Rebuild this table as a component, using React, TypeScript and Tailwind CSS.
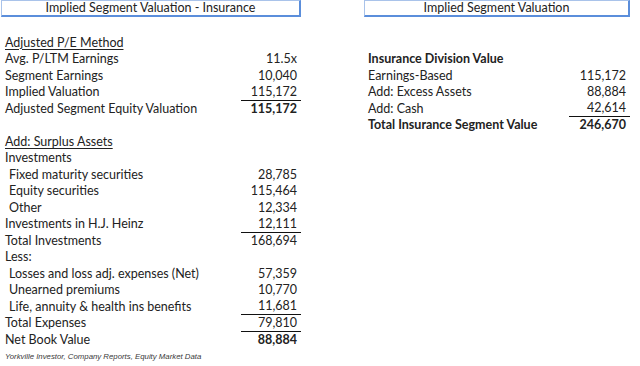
import React from "react";

type Row = {
  label?: string;
  value?: string;
  indent?: boolean;
  bold?: boolean;
  boldValue?: boolean;
  heading?: boolean;
  line?: boolean;
};

const leftRows: Row[] = [
  { label: "Adjusted P/E Method", heading: true },
  { label: "Avg. P/LTM Earnings", value: "11.5x" },
  { label: "Segment Earnings", value: "10,040" },
  { label: "Implied Valuation", value: "115,172", line: true },
  { label: "Adjusted Segment Equity Valuation", value: "115,172", boldValue: true },
  {},
  { label: "Add: Surplus Assets", heading: true },
  { label: "Investments" },
  { label: "Fixed maturity securities", value: "28,785", indent: true },
  { label: "Equity securities", value: "115,464", indent: true },
  { label: "Other", value: "12,334", indent: true },
  { label: "Investments in H.J. Heinz", value: "12,111", line: true },
  { label: "Total Investments", value: "168,694" },
  { label: "Less:" },
  { label: "Losses and loss adj. expenses (Net)", value: "57,359", indent: true },
  { label: "Unearned premiums", value: "10,770", indent: true },
  { label: "Life, annuity & health ins benefits", value: "11,681", indent: true, line: true },
  { label: "Total Expenses", value: "79,810", line: true },
  { label: "Net Book Value", value: "88,884", boldValue: true },
];

const rightRows: Row[] = [
  {},
  { label: "Insurance Division Value", bold: true },
  { label: "Earnings-Based", value: "115,172" },
  { label: "Add: Excess Assets", value: "88,884" },
  { label: "Add: Cash", value: "42,614", line: true },
  { label: "Total Insurance Segment Value", value: "246,670", bold: true, boldValue: true },
];

const TitleBox = ({ text }: { text: string }) => (
  <div className="h-[17px] flex items-center justify-center border-t border-l border-t-[#a9c3ea] border-l-[#a9c3ea] border-r-2 border-b-2 border-r-[#5b8edb] border-b-[#5b8edb] text-[12.5px] leading-none">
    {text}
  </div>
);

const SheetRow = ({ row, numWidth }: { row: Row; numWidth: string }) => (
  <div className="h-[16.5px] flex items-center">
    <div className={`flex-1 ${row.indent ? "pl-[8px]" : "pl-[4px]"} ${row.bold ? "font-bold" : ""}`}>
      <span className={row.heading ? "underline underline-offset-2" : ""}>{row.label}</span>
    </div>
    <div
      className={`${numWidth} h-full flex items-center justify-end pr-[4px] ${
        row.boldValue ? "font-bold" : ""
      } ${row.line ? "border-b border-[#111]" : ""}`}
    >
      {row.value}
    </div>
  </div>
);

export default function App() {
  return (
    <div
      className="w-[640px] h-[366px] bg-white text-[#222] text-[12.5px] leading-none overflow-hidden"
      style={{ fontFamily: "Lato, 'Open Sans', sans-serif" }}
    >
      <div className="flex">
        <div className="w-[300px] ml-[1px]">
          <TitleBox text="Implied Segment Valuation - Insurance" />
          <div className="mt-[17.75px]">
            {leftRows.map((r, i) => (
              <SheetRow key={i} row={r} numWidth="w-[60px]" />
            ))}
            <div
              className="h-[16.5px] flex items-center pl-[4px] italic text-[7.8px] text-[#3a3a3a]"
              style={{ fontFamily: "'Liberation Sans', Arial, sans-serif" }}
            >
              Yorkville Investor, Company Reports, Equity Market Data
            </div>
          </div>
        </div>
        <div className="w-[266px] ml-[63px]">
          <TitleBox text="Implied Segment Valuation" />
          <div className="mt-[17.75px]">
            {rightRows.map((r, i) => (
              <SheetRow key={i} row={r} numWidth="w-[61px]" />
            ))}
          </div>
        </div>
      </div>
    </div>
  );
}
